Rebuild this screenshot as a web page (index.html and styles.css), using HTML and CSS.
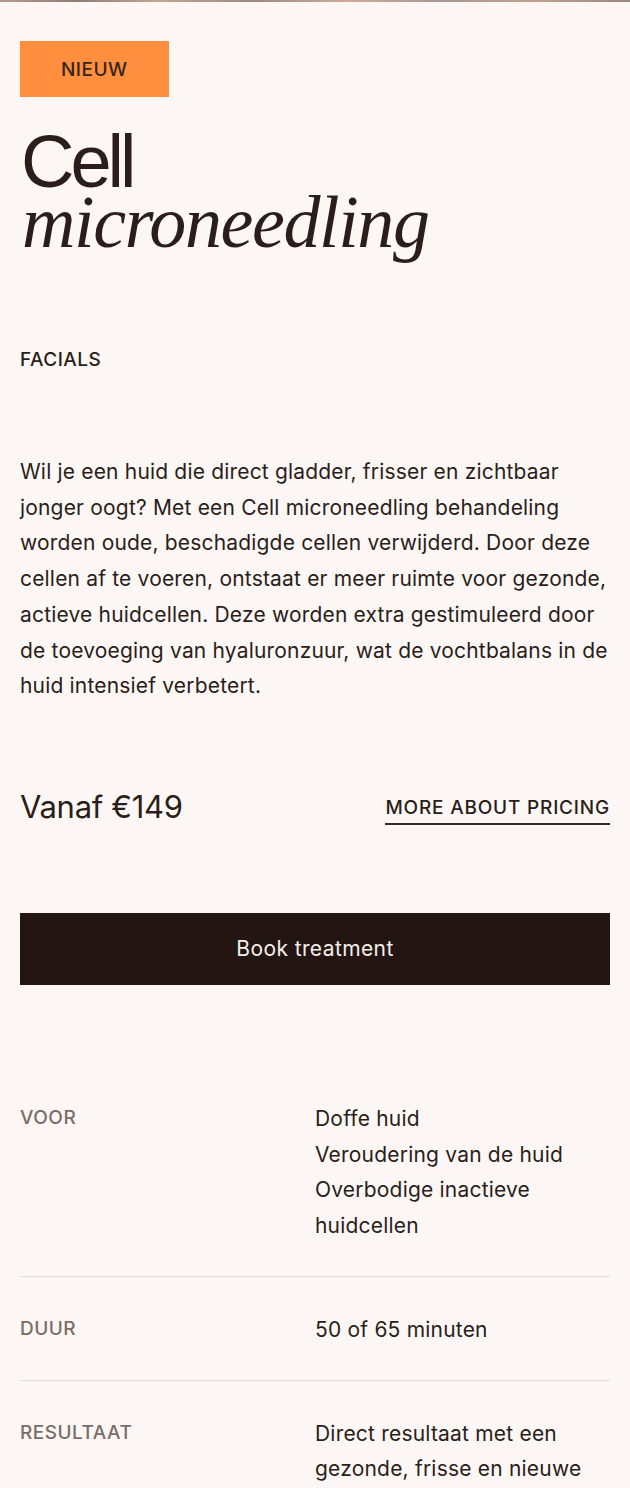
FILE: index.html
```html
<!DOCTYPE html>
<html lang="nl">
<head>
<meta charset="utf-8">
<meta name="viewport" content="width=device-width, initial-scale=1">
<title>Cell microneedling</title>
<link rel="stylesheet" href="styles.css">
</head>
<body>
<div class="hero-edge"></div>
<main class="page">
  <span class="badge">NIEUW</span>
  <h1 class="title">
    <span class="title-sans">Cell</span>
    <span class="title-serif">microneedling</span>
  </h1>
  <p class="category">FACIALS</p>
  <p class="intro">Wil je een huid die direct gladder, frisser en zichtbaar jonger oogt? Met een Cell microneedling behandeling worden oude, beschadigde cellen verwijderd. Door deze cellen af te voeren, ontstaat er meer ruimte voor gezonde, actieve huidcellen. Deze worden extra gestimuleerd door de toevoeging van hyaluronzuur, wat de vochtbalans in de huid intensief verbetert.</p>
  <div class="price-row">
    <span class="price">Vanaf €149</span>
    <a class="price-link" href="#">MORE ABOUT PRICING</a>
  </div>
  <a class="book-btn" href="#">Book treatment</a>
  <dl class="specs">
    <div class="spec-row">
      <dt class="spec-label">VOOR</dt>
      <dd class="spec-value">Doffe huid<br>Veroudering van de huid<br>Overbodige inactieve huidcellen</dd>
    </div>
    <div class="spec-row">
      <dt class="spec-label">DUUR</dt>
      <dd class="spec-value">50 of 65 minuten</dd>
    </div>
    <div class="spec-row">
      <dt class="spec-label">RESULTAAT</dt>
      <dd class="spec-value">Direct resultaat met een gezonde, frisse en nieuwe uitstraling</dd>
    </div>
  </dl>
</main>
</body>
</html>
```
FILE: styles.css
```css
* { box-sizing: border-box; }
html, body {
  margin: 0;
  padding: 0;
  background: #fcf7f4;
}
body {
  font-family: Inter, "Liberation Sans", Arial, sans-serif;
  color: #2b1d19;
  -webkit-font-smoothing: antialiased;
}
.hero-edge {
  height: 2px;
  background: linear-gradient(90deg, #b8998c 0%, #8e7e79 12%, #c8a390 25%, #9c8a84 40%, #d1a996 55%, #a89894 70%, #c59f8d 85%, #9a8781 100%);
}
.page {
  padding: 39px 20px 40px;
  display: flex;
  flex-direction: column;
  align-items: stretch;
}
.badge {
  align-self: flex-start;
  display: inline-flex;
  align-items: center;
  justify-content: center;
  height: 56px;
  padding: 0 41px;
  background: #ff8f3f;
  color: #35241c;
  font-size: 19px;
  font-weight: 500;
  letter-spacing: 0.5px;
}
.title {
  margin: 35px 0 0;
  font-weight: 400;
  color: #2b1d19;
}
.title-sans {
  display: block;
  font-family: "Liberation Sans", Arial, sans-serif;
  font-size: 74px;
  line-height: 60px;
  letter-spacing: -4px;
  margin-left: 1px;
}
.title-serif {
  display: block;
  font-family: "Liberation Serif", "Times New Roman", serif;
  font-style: italic;
  font-size: 74px;
  line-height: 60px;
  letter-spacing: -1.4px;
  margin-left: 2px;
}
.category {
  margin: 96px 0 0;
  font-size: 19px;
  line-height: 24px;
  font-weight: 500;
  letter-spacing: 0.5px;
}
.intro {
  margin: 82px 0 0;
  font-size: 21px;
  line-height: 35.7px;
  font-weight: 400;
  letter-spacing: 0.18px;
}
.price-row {
  margin-top: 85px;
  display: flex;
  justify-content: space-between;
  align-items: flex-end;
}
.price {
  font-size: 31px;
  line-height: 36px;
  letter-spacing: -0.3px;
}
.price-link {
  color: #2b1d19;
  text-decoration: none;
  font-size: 19px;
  line-height: 24px;
  font-weight: 500;
  letter-spacing: 0.8px;
  padding-bottom: 3px;
  border-bottom: 2px solid #3a2a25;
}
.book-btn {
  margin-top: 88px;
  display: flex;
  align-items: center;
  justify-content: center;
  height: 72px;
  background: #231512;
  color: #f6eee9;
  text-decoration: none;
  font-size: 21px;
  font-weight: 400;
  letter-spacing: 0.4px;
}
.specs {
  margin: 80px 0 0;
}
.spec-row {
  display: grid;
  grid-template-columns: 1fr 1fr;
  padding: 36px 0 32px;
  border-bottom: 1px solid #e6dcd3;
}
.spec-row + .spec-row {
  padding-top: 35px;
}
.spec-label {
  margin: -2px 0 0;
  font-size: 19px;
  line-height: 38px;
  font-weight: 500;
  color: #7a6c68;
  letter-spacing: 0.5px;
}
.spec-value {
  margin: 0;
  font-size: 21px;
  line-height: 35.7px;
  letter-spacing: 0.2px;
  color: #2b1d19;
}
```
